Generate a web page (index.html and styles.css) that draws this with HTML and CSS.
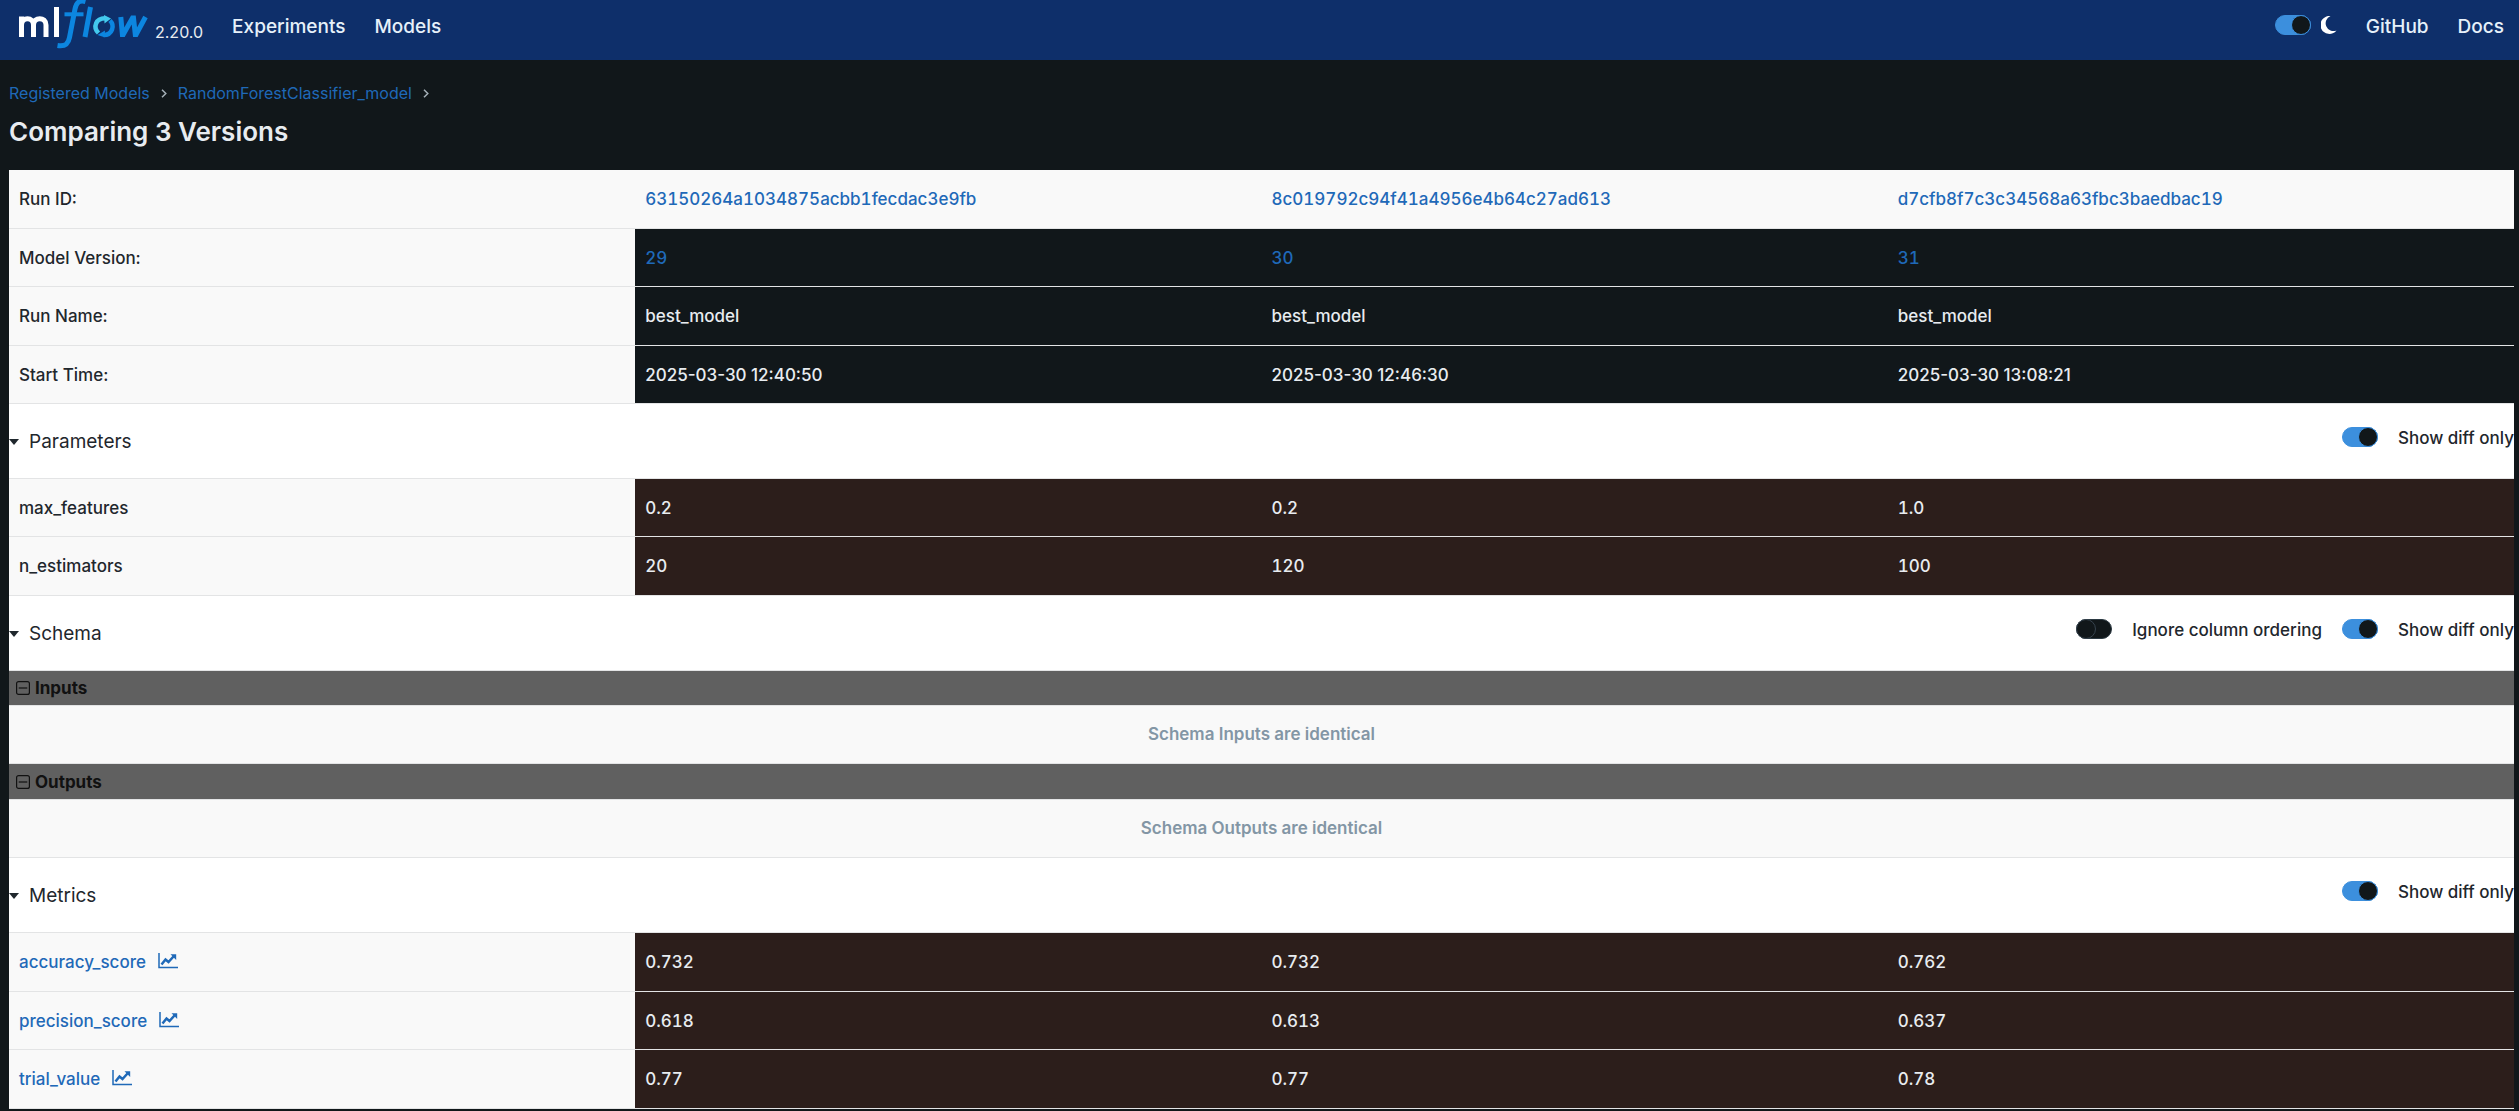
FILE: index.html
```html
<!DOCTYPE html>
<html lang="en">
<head>
<meta charset="utf-8">
<title>Comparing 3 Versions - MLflow</title>
<link rel="stylesheet" href="styles.css">
</head>
<body>
<svg class="sprite" aria-hidden="true">
  <symbol id="chart" viewBox="0 0 20 16">
    <path d="M1 0v14.500H20" fill="none" stroke="currentColor" stroke-width="1.500"/>
    <path d="M3.500 11.500 7.500 6.500 10.500 9 15.500 3.500" fill="none" stroke="currentColor" stroke-width="2.500"/>
    <path d="M12.500 1.200H18.200V6.900Z" fill="currentColor"/>
  </symbol>
  <symbol id="minus-box" viewBox="0 0 14 14">
    <rect x=".6" y=".6" width="12.800" height="12.800" rx="2" fill="none" stroke="currentColor" stroke-width="1.200"/>
    <path d="M2.700 7h8.600" stroke="currentColor" stroke-width="1.200"/>
  </symbol>
  <symbol id="caret" viewBox="0 0 10 6"><path d="M0 0h10L5 6z" fill="currentColor"/></symbol>
</svg>
<header class="topbar">
  <a class="logo" href="#" aria-label="MLflow home">
    <svg viewBox="0 0 132 50" width="132" height="50">
      <g fill="none" stroke="#fff" stroke-width="5">
        <path d="M2.500 37V16.500M2.500 25c0-8.500 12-8.500 12 0v12M14.500 25c0-8.500 12.500-8.500 12.500 0v12"/>
        <path d="M37.500 7v30"/>
      </g>
      <g fill="none" stroke="#0c86e0">
        <path d="M66.500 1.500c-6-1.600-9 .5-10.500 7.500L50.500 37.500c-1.300 7-4.500 9.200-12 8" stroke-width="5"/>
        <path d="M45.500 14.300h19" stroke-width="4"/>
        <path d="M71.500 7 66 37" stroke-width="5"/>
        <path d="M91 20.500c5 5 2.500 14.500-6.500 14.500" stroke-width="4.500"/>
        <path d="M101.800 17l1.600 17.500h.8L113.500 18h1l1.800 16.500h.8L126.500 17" stroke-width="5"/>
      </g>
      <path d="M79.500 33C73.500 27 77 18.200 86 18.200" fill="none" stroke="#43c9ed" stroke-width="4.500"/>
      <path d="M85 15l7 3.500-6.500 5z" fill="#43c9ed"/>
      <path d="M86 30.500l-7.500 4.500 7 2.300z" fill="#0c86e0"/>
    </svg>
  </a>
  <span class="release">2.20.0</span>
  <nav class="nav">
    <a href="#">Experiments</a>
    <a href="#">Models</a>
  </nav>
  <nav class="nav nav-right">
    <label class="theme"><input class="switch" type="checkbox" role="switch" aria-label="Dark theme" checked>
      <svg viewBox="0 0 16 18" width="16" height="18"><path d="M9.500 0A9 9 0 1 0 15.500 14.500 7 7 0 0 1 9.500 0Z" fill="#fff"/></svg>
    </label>
    <a href="#">GitHub</a>
    <a href="#">Docs</a>
  </nav>
</header>
<main class="page">
  <nav class="crumbs" aria-label="Breadcrumb">
    <a href="#">Registered Models</a>
    <svg viewBox="0 0 6 9" width="6" height="9"><path d="M1 .7 4.800 4.500 1 8.300" fill="none" stroke="currentColor" stroke-width="1.500"/></svg>
    <a href="#">RandomForestClassifier_model</a>
    <svg viewBox="0 0 6 9" width="6" height="9"><path d="M1 .7 4.800 4.500 1 8.300" fill="none" stroke="currentColor" stroke-width="1.500"/></svg>
  </nav>
  <h1 class="title">Comparing 3 Versions</h1>
  <div class="compare">
    <table class="grid grid-runs">
      <thead>
        <tr><th scope="row">Run ID:</th><th scope="col"><a href="#">63150264a1034875acbb1fecdac3e9fb</a></th><th scope="col"><a href="#">8c019792c94f41a4956e4b64c27ad613</a></th><th scope="col"><a href="#">d7cfb8f7c3c34568a63fbc3baedbac19</a></th></tr>
      </thead>
      <tbody>
        <tr><th scope="row">Model Version:</th><td><a href="#">29</a></td><td><a href="#">30</a></td><td><a href="#">31</a></td></tr>
        <tr class="tall"><th scope="row">Run Name:</th><td>best_model</td><td>best_model</td><td>best_model</td></tr>
        <tr class="times"><th scope="row">Start Time:</th><td>2025-03-30 12:40:50</td><td>2025-03-30 12:46:30</td><td>2025-03-30 13:08:21</td></tr>
      </tbody>
    </table>
    <div class="section">
      <button class="toggle" type="button"><svg class="caret"><use href="#caret"/></svg>Parameters</button>
      <label class="option"><input class="switch" type="checkbox" role="switch" checked>Show diff only</label>
    </div>
    <table class="grid grid-diff">
      <tbody>
        <tr><th scope="row">max_features</th><td>0.2</td><td>0.2</td><td>1.0</td></tr>
        <tr class="tall"><th scope="row">n_estimators</th><td>20</td><td>120</td><td>100</td></tr>
      </tbody>
    </table>
    <div class="section">
      <button class="toggle" type="button"><svg class="caret"><use href="#caret"/></svg>Schema</button>
      <label class="option"><input class="switch" type="checkbox" role="switch">Ignore column ordering</label>
      <label class="option"><input class="switch" type="checkbox" role="switch" checked>Show diff only</label>
    </div>
    <button class="band" type="button"><svg class="box"><use href="#minus-box"/></svg>Inputs</button>
    <p class="same">Schema Inputs are identical</p>
    <button class="band" type="button"><svg class="box"><use href="#minus-box"/></svg>Outputs</button>
    <p class="same">Schema Outputs are identical</p>
    <div class="section">
      <button class="toggle" type="button"><svg class="caret"><use href="#caret"/></svg>Metrics</button>
      <label class="option"><input class="switch" type="checkbox" role="switch" checked>Show diff only</label>
    </div>
    <table class="grid grid-diff">
      <tbody>
        <tr class="tall"><th scope="row"><a href="#">accuracy_score<svg class="chart"><use href="#chart"/></svg></a></th><td>0.732</td><td>0.732</td><td>0.762</td></tr>
        <tr><th scope="row"><a href="#">precision_score<svg class="chart"><use href="#chart"/></svg></a></th><td>0.618</td><td>0.613</td><td>0.637</td></tr>
        <tr class="tall"><th scope="row"><a href="#">trial_value<svg class="chart"><use href="#chart"/></svg></a></th><td>0.77</td><td>0.77</td><td>0.78</td></tr>
      </tbody>
    </table>
  </div>
</main>
</body>
</html>
```
FILE: styles.css
```css
*, *::before { box-sizing: border-box; }
body {
  margin: 0;
  background: #11171a;
  color: #e8ecf0;
  font: 500 17px/24px Inter, "Liberation Sans", sans-serif;
}
a { color: #1f69b8; text-decoration: none; }
button { font: inherit; color: inherit; border: 0; background: none; padding: 0; }
.sprite { display: none; }

.topbar {
  display: flex;
  height: 60px;
  padding: 0 15px 0 19px;
  background: #0e2f6a;
}
.logo { width: 132px; height: 50px; }
.release { margin: 20px 0 0 4px; font-size: 16px; font-weight: 400; }
.nav { display: flex; gap: 29px; margin-left: 29px; padding-top: 15px; font-size: 19px; }
.nav a { color: #e6f1fa; }
.nav-right { margin-left: auto; }
.theme { display: flex; align-items: center; gap: 10px; height: 20px; }

.switch {
  appearance: none;
  width: 36px;
  height: 20px;
  margin: 0;
  border: 1px solid #2b3942;
  border-radius: 10px;
  background: #11171a;
}
.switch::before {
  content: "";
  display: block;
  width: 20px;
  height: 20px;
  margin: -1px;
  border: 1px solid #37444f;
  border-radius: 50%;
  background: #11171a;
}
.switch:checked { border-color: #3c8fdd; background: #3c8fdd; }
.switch:checked::before { margin-left: 15px; border-color: #3c8fdd; }

.page { padding: 21px 5px 2px 9px; }
.crumbs { display: flex; align-items: center; gap: 11px; font-size: 16px; font-weight: 400; color: #a5b0b8; }
.title { margin: 11px 0 23px; font-size: 26px; line-height: 31px; font-weight: 600; }

.compare { background: #fff; color: #1f272d; }
.grid { width: 100%; table-layout: fixed; border-collapse: separate; border-spacing: 0; font-variant-numeric: tabular-nums; }
.grid tr { height: 58px; }
.grid thead tr, .grid .tall { height: 59px; }
.grid th, .grid td { padding: 0 10px; border-bottom: 1px solid #e3e4e5; text-align: left; font-weight: 500; }
.grid th { background: #f9f9f9; }
.grid td { background: #11171a; color: #e8ecf0; }
.grid-diff td { background: #2c1e1b; }
.times { font-variant-numeric: normal; }
.chart { width: 20px; height: 16px; margin-left: 12px; vertical-align: -1px; }

.section { display: flex; gap: 20px; height: 75px; border-bottom: 1px solid #e3e4e5; }
.toggle { display: flex; align-items: center; gap: 10px; margin-right: auto; padding-top: 2px; font-size: 19px; font-weight: 400; }
.caret { width: 10px; height: 6px; }
.option { display: flex; align-items: center; gap: 20px; height: 68px; }
.option .switch { margin-bottom: 2px; }

.band {
  display: flex;
  align-items: center;
  gap: 5px;
  width: 100%;
  height: 35px;
  padding-left: 7px;
  border-bottom: 1px solid #e3e4e5;
  background: #606060;
  color: #111;
  font-size: 17px;
  font-weight: 700;
}
.same + .band { height: 36px; }
.box { width: 14px; height: 14px; }
.same {
  margin: 0;
  border-bottom: 1px solid #e3e4e5;
  background: #f9f9f9;
  color: #8396a5;
  line-height: 57px;
  text-align: center;
  font-weight: 600;
}
```
